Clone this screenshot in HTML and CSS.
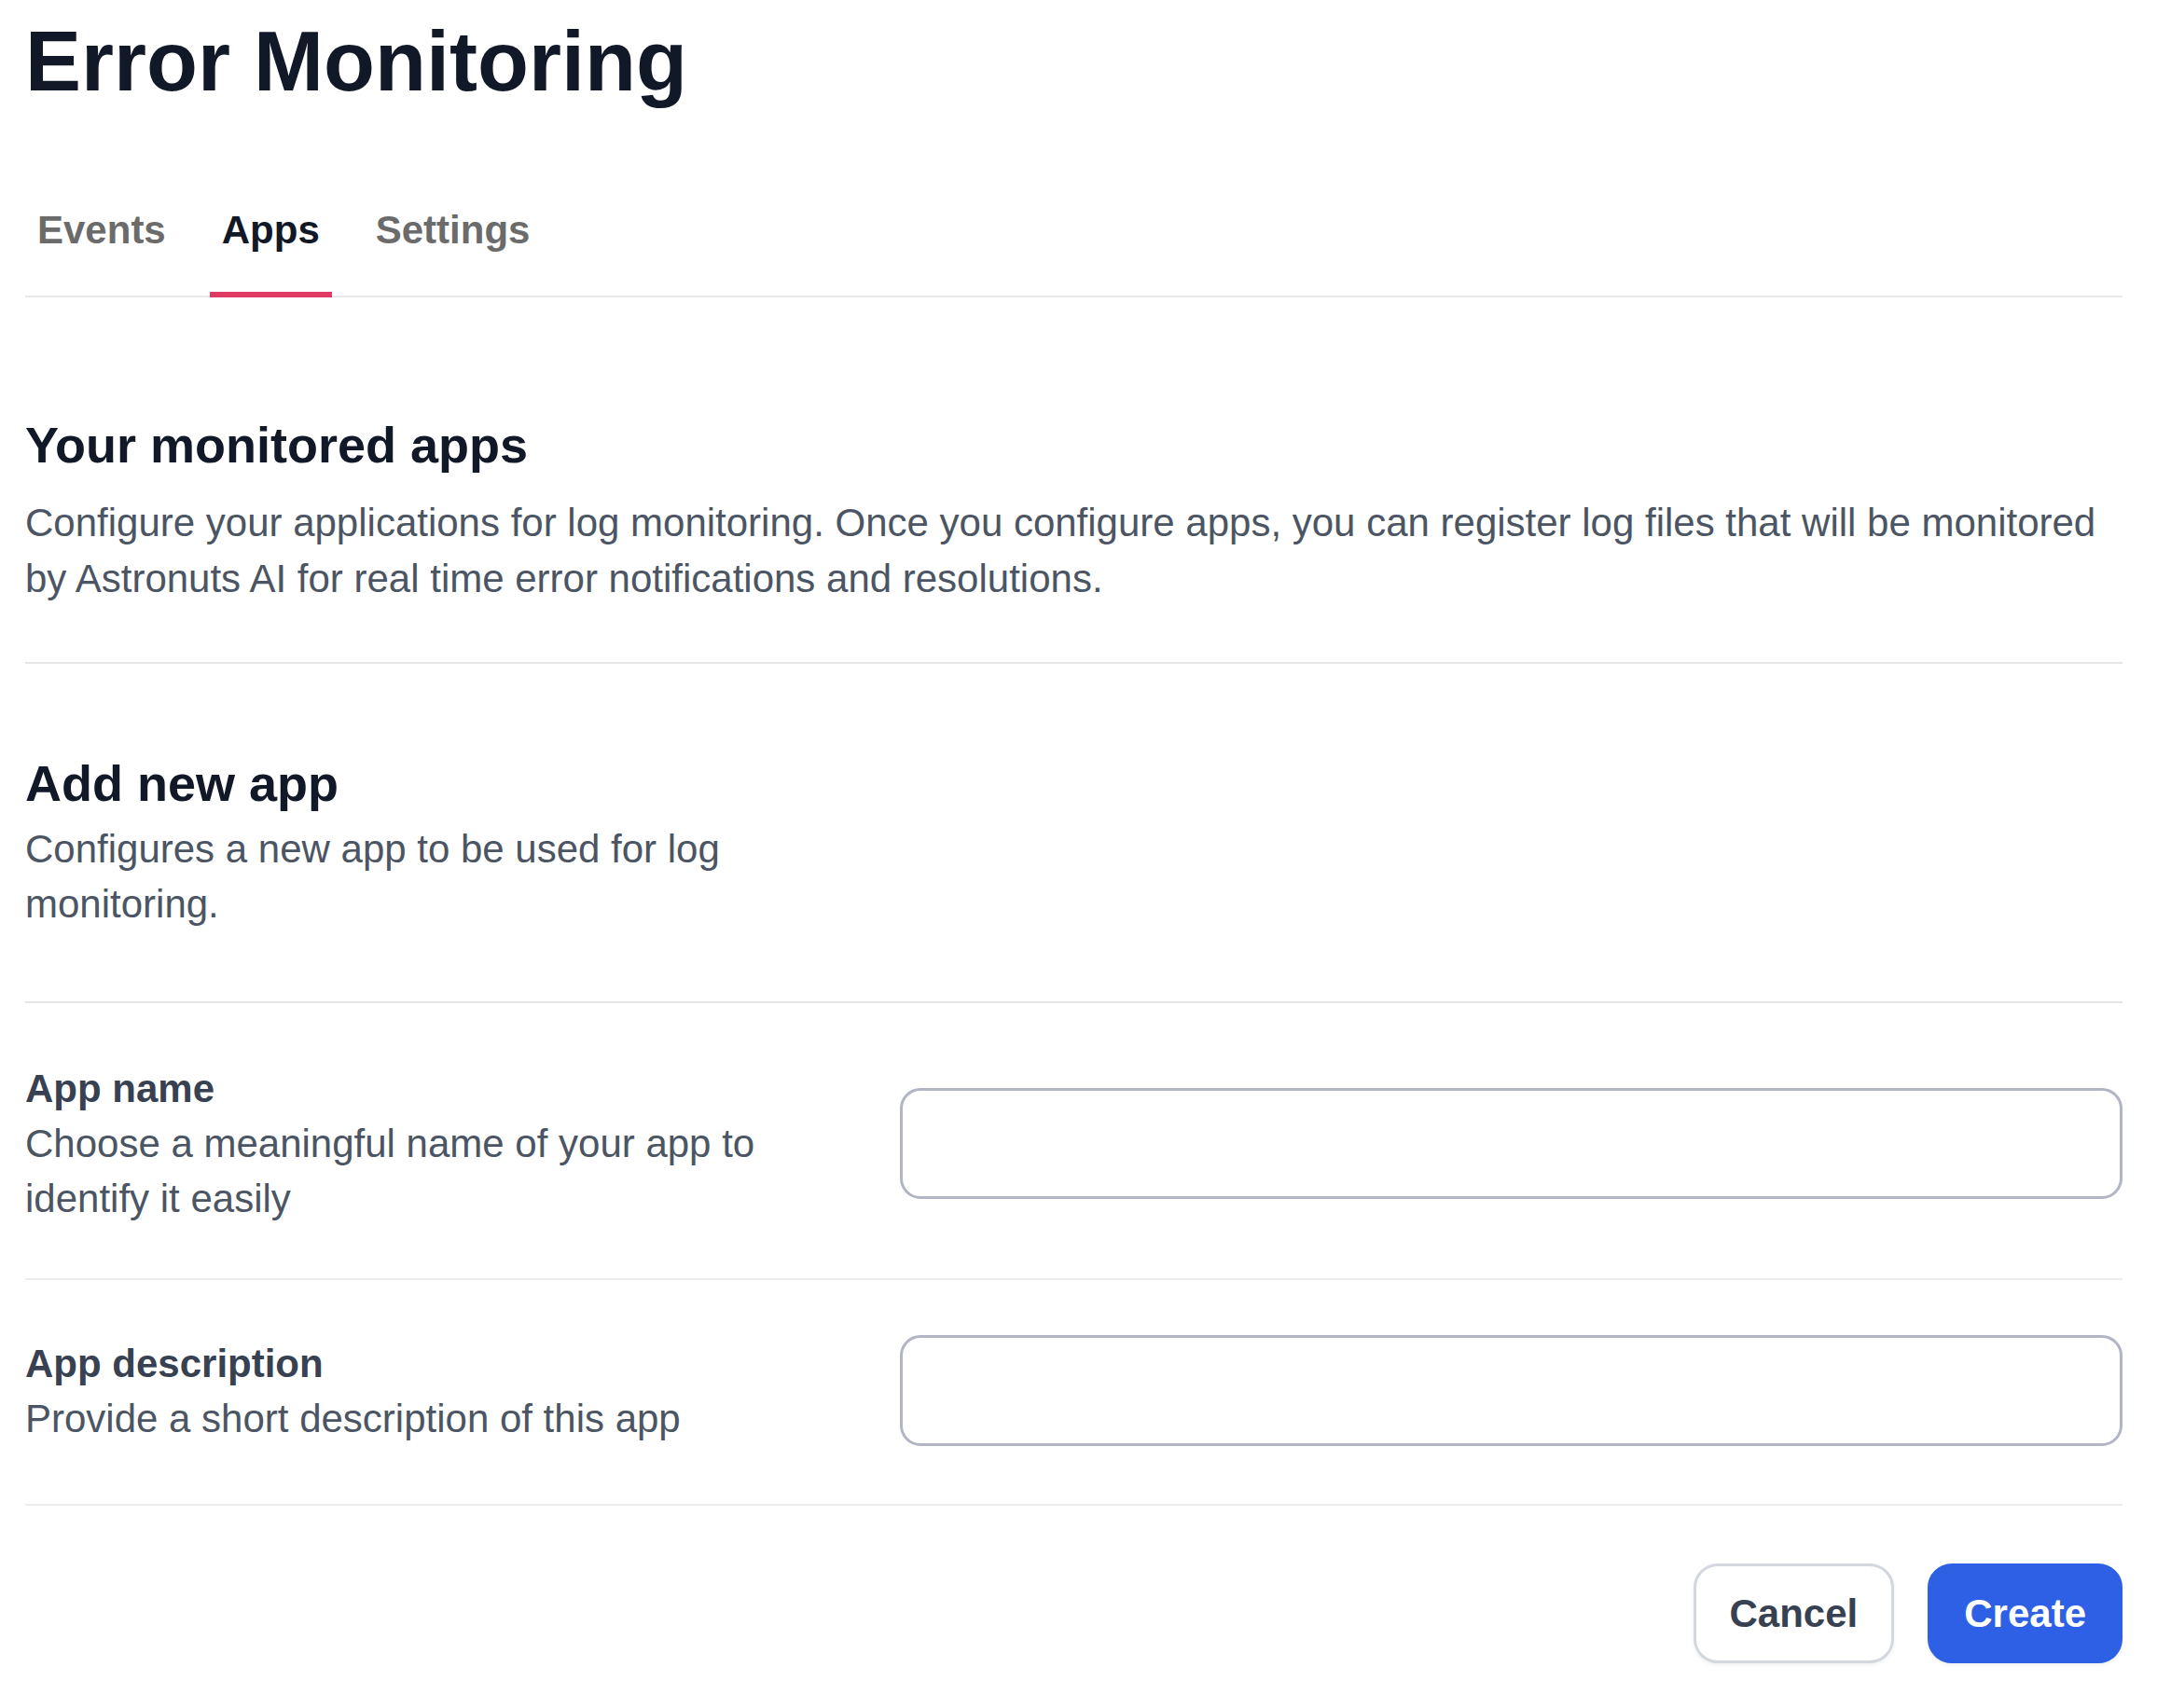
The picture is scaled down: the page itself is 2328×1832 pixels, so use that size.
FILE: index.html
```html
<!DOCTYPE html>
<html lang="en">
<head>
<meta charset="utf-8">
<title>Error Monitoring</title>
<link rel="stylesheet" href="styles.css">
</head>
<body>
<div class="page">
  <h1 class="title">Error Monitoring</h1>

  <nav class="tabs">
    <a class="tab">Events</a>
    <a class="tab active">Apps</a>
    <a class="tab">Settings</a>
  </nav>

  <section class="intro">
    <h2 class="section-title">Your monitored apps</h2>
    <p class="intro-text">Configure your applications for log monitoring. Once you configure apps, you can register log files that will be monitored by Astronuts AI for real time error notifications and resolutions.</p>
  </section>

  <hr class="divider divider-intro">

  <section class="add-header">
    <h2 class="section-title">Add new app</h2>
    <p class="add-text">Configures a new app to be used for log monitoring.</p>
  </section>

  <hr class="divider divider-add">

  <form class="app-form">
    <div class="field-row field-row-first">
      <div class="field-info">
        <div class="field-label">App name</div>
        <div class="field-help">Choose a meaningful name of your app to identify it easily</div>
      </div>
      <input class="field-input" type="text">
    </div>
    <div class="field-row">
      <div class="field-info">
        <div class="field-label">App description</div>
        <div class="field-help">Provide a short description of this app</div>
      </div>
      <input class="field-input" type="text">
    </div>
    <div class="actions">
      <button type="button" class="btn btn-cancel">Cancel</button>
      <button type="button" class="btn btn-create">Create</button>
    </div>
  </form>
</div>
</body>
</html>
```

FILE: styles.css
```css
* {
  box-sizing: border-box;
}

html, body {
  margin: 0;
  padding: 0;
  background: #ffffff;
}

body {
  font-family: "Liberation Sans", Arial, Helvetica, sans-serif;
  color: #111827;
}

.page {
  padding: 21px 52px 40px 27px;
}

.title {
  margin: 0;
  font-size: 90px;
  line-height: 90px;
  font-weight: 700;
  color: #111827;
}

.tabs {
  margin-top: 106px;
  display: flex;
  gap: 34px;
  border-bottom: 2px solid #e8e8ec;
}

.tab {
  display: block;
  padding: 0 13px 36px;
  margin-bottom: -2px;
  font-size: 42px;
  line-height: 60px;
  font-weight: 700;
  color: #6b6b6b;
  border-bottom: 6px solid transparent;
  cursor: pointer;
}

.tab.active {
  color: #111827;
  border-bottom-color: #de3a63;
}

.intro {
  padding-top: 126px;
}

.section-title {
  margin: 0;
  font-size: 54px;
  line-height: 64px;
  font-weight: 700;
  color: #111827;
}

.intro-text {
  margin: 22px 0 0;
  font-size: 42px;
  line-height: 60px;
  color: #4b5563;
}

.divider {
  border: 0;
  height: 2px;
  background: #e5e5e7;
  margin: 0;
}

.divider-intro {
  margin-top: 59px;
}

.add-header {
  padding-top: 96px;
}

.add-text {
  margin: 9px 0 0;
  max-width: 850px;
  font-size: 42px;
  line-height: 59px;
  color: #4b5563;
}

.divider-add {
  margin-top: 75px;
}

.field-row {
  display: flex;
  align-items: center;
  gap: 88px;
  padding: 59px 0 62px;
  border-bottom: 2px solid #ececef;
}

.field-row-first {
  padding: 62px 0 56px;
}

.field-info {
  width: 850px;
  flex: none;
}

.field-label {
  font-size: 42px;
  line-height: 59px;
  font-weight: 700;
  color: #374151;
}

.field-help {
  font-size: 42px;
  line-height: 59px;
  color: #4b5563;
}

.field-input {
  flex: 1;
  min-width: 0;
  height: 119px;
  border: 3px solid #b1b5c4;
  border-radius: 22px;
  background: #ffffff;
  font-family: inherit;
  font-size: 42px;
  padding: 0 28px;
  outline: none;
}

.actions {
  display: flex;
  justify-content: flex-end;
  gap: 36px;
  padding-top: 62px;
}

.btn {
  font-family: inherit;
  font-size: 42px;
  line-height: 59px;
  font-weight: 700;
  padding: 21px 36px;
  border-radius: 26px;
  border: 3px solid transparent;
  cursor: pointer;
}

.btn-cancel {
  background: #ffffff;
  color: #374151;
  border-color: #d3d7de;
  box-shadow: 0 2px 4px rgba(0, 0, 0, 0.06);
}

.btn-create {
  background: #2e60e5;
  color: #ffffff;
  border-color: #2e60e5;
  box-shadow: 0 2px 4px rgba(0, 0, 0, 0.06);
}
```
